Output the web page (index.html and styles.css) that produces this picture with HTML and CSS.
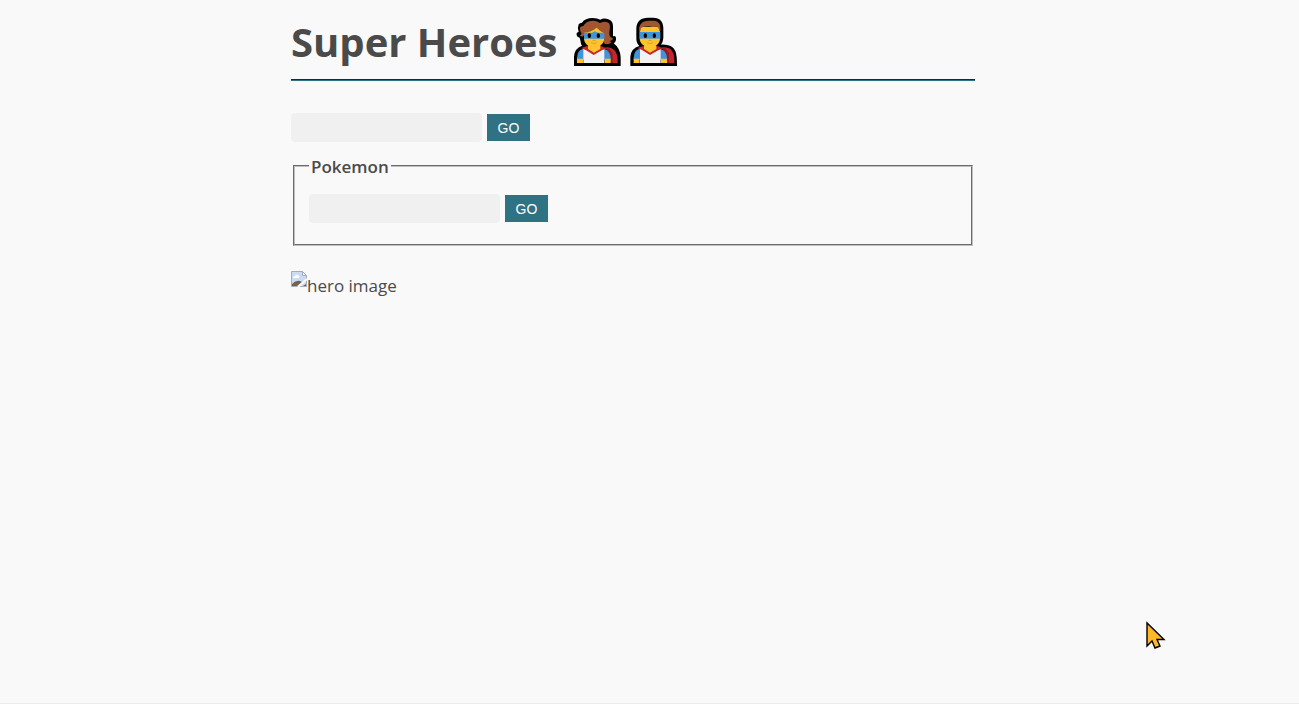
FILE: index.html
```html
<!DOCTYPE html>
<html lang="en">
<head>
<meta charset="utf-8">
<meta name="viewport" content="width=device-width, initial-scale=1">
<title>Super Heroes</title>
<link rel="stylesheet" href="styles.css">
</head>
<body>
<main class="page">
  <h1 class="title">
    <span>Super Heroes</span>
    <span class="heroes">
      <svg class="hero" viewBox="0 0 162 168" aria-hidden="true">
        <path fill="#000" d="M12 156V128Q13 103 36 95Q32 90 32 83L29 71Q18 69 20 57L26 53Q21 43 26 31Q29 26 36 26Q45 12 68 12Q83 12 91 17Q101 11 115 16Q129 21 129 37V67Q137 63 138 72Q139 84 131 88Q151 103 152 130V156Z"/>
        <path fill="#c1272d" d="M100 101Q122 96 132 107Q143 119 143 136V147H124L110 104Z"/>
        <path fill="#911c21" d="M106 102L119 119L122 147H128V118L116 101Z"/>
        <path fill="#3f94db" d="M21 132Q22 108 38 105H103Q119 109 122 132V137H21Z"/>
        <path fill="#ffc32e" d="M21 134H39V147H21ZM104 134H122V147H104Z"/>
        <path fill="#f2f2f2" d="M40 104H103V147H40Z"/>
        <path fill="#c1272d" d="M33 102L49 97H95L110 104L97 108L71 123L47 108Z"/>
        <path fill="#ffc32e" d="M54 94H91V105L72 116L54 105Z"/>
        <path fill="#ffc32e" d="M42 45Q57 35 72 37L103 46V72C103 89 91 99 72 99C53 99 42 89 42 72Z"/>
        <path fill="#a1562f" d="M29 65L35 59Q29 52 30 41Q32 36 40 36Q47 21 68 20Q80 20 90 27Q108 19 117 28Q122 34 118 55Q117 71 129 73Q128 80 118 81L125 85Q119 91 109 91Q100 90 102 80V58Q90 52 80 41Q64 54 43 56V63L38 68Z"/>
        <path fill="#3f94db" d="M42 56H66L75 52L84 56H103V74H42Z"/>
        <ellipse cx="58" cy="65" rx="5" ry="7"/><ellipse cx="85" cy="65" rx="5" ry="7"/>
        <path fill="none" stroke="#c58c25" stroke-width="2" d="M67 79H77M63 86Q72 91 81 86"/>
      </svg>
      <svg class="hero" viewBox="0 0 162 168" aria-hidden="true">
        <path fill="#000" d="M10 156V128Q12 103 37 96Q27 88 28 69V44C28 22 42 11 62 11H79C98 11 109 22 109 43V72Q108 84 102 92Q135 90 145 111Q150 122 150 156Z"/>
        <path fill="#c1272d" d="M99 101Q123 97 133 108Q142 119 142 136V147H122L108 103Z"/>
        <path fill="#911c21" d="M104 102L117 119L120 147H126V118L114 101Z"/>
        <path fill="#3f94db" d="M20 132Q21 108 37 105H101Q117 109 120 132V137H20Z"/>
        <path fill="#ffc32e" d="M20 134H38V147H20ZM102 134H120V147H102Z"/>
        <path fill="#f2f2f2" d="M39 104H101V147H39Z"/>
        <path fill="#c1272d" d="M31 102L47 97H94L109 104L95 108L69 123L45 108Z"/>
        <path fill="#ffc32e" d="M51 94H88V105L69 116L51 105Z"/>
        <path fill="#ffc32e" d="M38 38H99V73C99 89 88 99 69 99C50 99 38 89 38 73Z"/>
        <path fill="#a1562f" d="M37 52V42Q40 20 65 20H82Q100 22 100 42V52H97Q96 38 87 38Q77 41 67 36Q50 36 42 42L40 52Z"/>
        <path fill="#3f94db" d="M38 54H100V74H38Z"/>
        <ellipse cx="55" cy="65" rx="5" ry="7"/><ellipse cx="82" cy="65" rx="5" ry="7"/>
        <path fill="none" stroke="#c58c25" stroke-width="2" d="M64 79H74M60 86Q69 91 78 86"/>
      </svg>
    </span>
  </h1>
  <form class="search">
    <input class="field" type="text" aria-label="Hero name">
    <button class="go" type="button">GO</button>
  </form>
  <fieldset class="group">
    <legend class="legend">Pokemon</legend>
    <div class="search">
      <input class="field" type="text" aria-label="Pokemon name">
      <button class="go" type="button">GO</button>
    </div>
  </fieldset>
  <div class="picture">
    <svg class="missing" viewBox="0 0 16 16" aria-hidden="true">
      <path fill="#c9dcf3" stroke="#a4adb7" d="M.5.5H11.5L15.5 4.5V15.5H.5Z"/>
      <path fill="#fff" d="M2 7Q2 5 4 5Q5 3 7 4Q9 5 8 7Z"/>
      <path fill="#f9f9f9" stroke="#a4adb7" d="M11.5.5V4.5H15.5Z"/>
      <path fill="#75614e" d="M1 15V13Q5 9 9 10L11 11L6 15ZM12 15L15 13V15Z"/>
      <path stroke="#f9f9f9" stroke-width="2" d="M7 16L16 8"/>
    </svg>
    <span>hero image</span>
  </div>
</main>
<svg class="pointer" viewBox="0 0 20 28" aria-hidden="true">
  <path fill="#fdb927" stroke="#000" stroke-width="1.4" d="M1 2V25L6 20L9 27L14 25L11 18.5H18Z"/>
</svg>
</body>
</html>
```
FILE: styles.css
```css
* {
  box-sizing: border-box;
}

body {
  margin: 0;
  min-height: 100vh;
  padding: 14px 33px 0 0;
  border-bottom: 1px solid #ebebeb;
  background: #f9f9f9;
  color: #4a4a4a;
  font: 17px/24px "Open Sans", "Noto Sans", sans-serif;
}

.page {
  max-width: 684px;
  margin: 0 auto;
}

.title {
  display: flex;
  align-items: center;
  gap: 12px;
  height: 67px;
  margin: 0 0 32px;
  padding-bottom: 10px;
  border-bottom: 1px solid #2f7283;
  box-shadow: inset 0 -1px #112d37;
  font-size: 40px;
  line-height: 54px;
}

.heroes {
  display: flex;
  gap: 3px;
}

.hero {
  width: 54px;
  height: 56px;
}

.search {
  display: flex;
  align-items: center;
  gap: 5px;
}

.field {
  width: 191px;
  height: 29px;
  padding: 4px 8px;
  border: 0;
  border-radius: 4px;
  background: #f0f0f0;
  font: inherit;
}

.go {
  width: 43px;
  height: 27px;
  padding: 0;
  border: 0;
  background: #2f7283;
  color: #fff;
  font: 14px/16px "Liberation Sans", sans-serif;
}

.group {
  margin: 11px 2px 25px;
  padding: 15px 14px 21px;
  border: 2px groove #c0c0c0;
}

.legend {
  padding: 2px 2px 0;
  font-weight: 600;
}

.picture {
  display: flex;
  align-items: flex-start;
}

.picture span {
  padding-top: 3px;
}

.missing {
  width: 16px;
  height: 16px;
}

.pointer {
  position: absolute;
  left: 1146px;
  top: 621px;
  width: 20px;
  height: 28px;
}
```
